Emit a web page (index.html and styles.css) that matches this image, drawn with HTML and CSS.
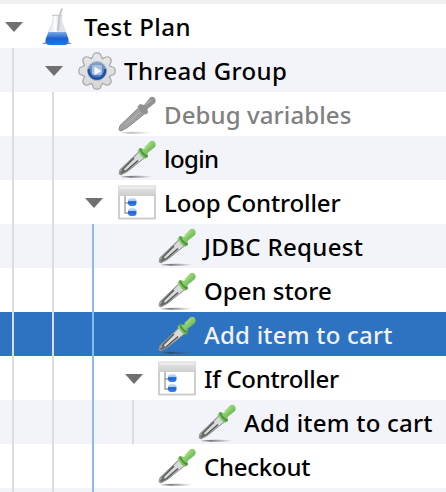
FILE: index.html
```html
<!DOCTYPE html>
<html lang="en">
<head>
<meta charset="utf-8">
<title>Test Plan</title>
<link rel="stylesheet" href="styles.css">
</head>
<body>
<svg class="defs" width="0" height="0" aria-hidden="true">
  <defs>
    <linearGradient id="glass" x1="0" y1="0" x2="1" y2="0"><stop offset="0" stop-color="#d8dde3"/><stop offset=".4" stop-color="#f5f7fa"/><stop offset=".6" stop-color="#dde2e7"/><stop offset="1" stop-color="#e4e8ed"/></linearGradient>
    <linearGradient id="liquid" x1="0" y1="0" x2="0" y2="1"><stop offset="0" stop-color="#7aaae6"/><stop offset=".5" stop-color="#1d60cf"/><stop offset="1" stop-color="#2374f5"/></linearGradient>
    <linearGradient id="bulb" x1="0" y1="0" x2="1" y2="1"><stop offset="0" stop-color="#7fbd63"/><stop offset=".45" stop-color="#8fd06c"/><stop offset="1" stop-color="#439039"/></linearGradient>
    <linearGradient id="shade"><stop offset="0" stop-color="#444" stop-opacity=".3"/><stop offset=".3" stop-color="#333" stop-opacity=".65"/><stop offset="1" stop-color="#555" stop-opacity="0"/></linearGradient>
    <linearGradient id="bar" x1="0" y1="0" x2="0" y2="1"><stop offset="0" stop-color="#e9e9e9"/><stop offset="1" stop-color="#cecece"/></linearGradient>
    <linearGradient id="ball" x1="0" y1="0" x2="0" y2="1"><stop offset="0" stop-color="#d5e7fa"/><stop offset=".38" stop-color="#9dc3ee"/><stop offset=".45" stop-color="#1c5fd0"/><stop offset="1" stop-color="#3d86ee"/></linearGradient>
    <linearGradient id="gearfill" x1="0" y1="0" x2="0" y2="1"><stop offset="0" stop-color="#e8e8e8"/><stop offset="1" stop-color="#d6d6d6"/></linearGradient>
    <linearGradient id="hub" x1="0" y1="0" x2="0" y2="1"><stop offset="0" stop-color="#8ba5ca"/><stop offset=".5" stop-color="#5c82bd"/><stop offset="1" stop-color="#3f78cc"/></linearGradient>
    <symbol id="flask" viewBox="0 0 38 38">
      <ellipse cx="19" cy="35.2" rx="14.500" ry="1.300" fill="#4b5057" opacity=".75"/>
      <path d="M15 7h8.500v6l6.500 17q2 6.500-3.500 7h-15q-5.500-.5-3.500-7L15 13z" fill="url(#glass)" stroke="#d8dce1" stroke-width=".8"/>
      <path d="M10.500 24h17.500l2.200 6.500q1.800 6-3.700 6.500h-15q-5.500-.5-3.500-6.500z" fill="url(#liquid)"/>
      <path d="M20 23l1.500-15 2.500-7.500" fill="none" stroke="#c2c6cb" stroke-width="2"/>
      <path d="M17.500 8v16" fill="none" stroke="#fff" stroke-width="2" opacity=".7"/>
      <path d="M14 7.500h10" stroke="#c8cdd2" stroke-width="1"/>
    </symbol>
    <symbol id="gear" viewBox="0 0 38 38">
      <path d="M15 4Q15 .8 19 .8T23 4L24.500 6.600 27.500 5.200Q30 4 32 6T32.800 10.500L31.400 13.500 34 15Q37.200 15 37.200 19T34 23L31.400 24.500 32.800 27.500Q34 30 32 32T27.500 32.800L24.500 31.400 23 34Q23 37.200 19 37.200T15 34L13.500 31.400 10.500 32.800Q8 34 6 32T5.200 27.500L6.600 24.500 4 23Q.8 23 .8 19T4 15L6.600 13.500 5.200 10.500Q4 8 6 6T10.500 5.200L13.500 6.600z" fill="url(#gearfill)" stroke="#a8a8a8" stroke-width="1.200"/>
      <circle cx="19" cy="19" r="9.500" fill="url(#hub)" stroke="#a9bbd5" stroke-width="1"/>
      <path d="M10.800 17a8.300 8.300 0 1 0 16.400 0" fill="none" stroke="#20509d" stroke-width="2.200"/>
      <rect x="14" y="13" width="10" height="10" rx="2" fill="#a9c0df"/>
      <path d="M16.500 14.500l7 4.500-7 4z" fill="#f3f6fb"/>
    </symbol>
    <symbol id="dropper" viewBox="0 0 38 38">
      <ellipse cx="19" cy="36.800" rx="16" ry="1" fill="url(#shade)"/>
      <path d="M21 11.500l6 6L9.500 31.500l-5.500 3q-2.500 1.200-3-1l1-4z" fill="#a3a6a4" stroke="#8a8d8b" stroke-width=".8"/>
      <path d="M21 12.500l5 5L9 30.500l-3 1-1.500-2z" fill="#d8dbd9"/>
      <path d="M4 30L16 18M8 31l12-10.500" fill="none" stroke="#585b59" stroke-width="1.500"/>
      <path d="M1.500 33l4-4 3 2.500-5 2.500z" fill="#696c6a"/>
      <path d="M19.500 10.500L22 8l4 1 6-7.500Q34 .2 36.500 1.500 38.500 4 37 7l-7.500 6 .5 4-2.500 1.500Q22 17 19.500 10.500z" fill="url(#bulb)"/>
      <path d="M22 8.500q2 6 7.500 8" fill="none" stroke="#4f9643" stroke-width="2.200"/>
      <path d="M27 8l5.500-5" stroke="#a1dc85" stroke-width="2.500" opacity=".65"/>
    </symbol>
    <symbol id="dropper-off" viewBox="0 0 38 38">
      <ellipse cx="19" cy="36.800" rx="16" ry="1" fill="url(#shade)" opacity=".5"/>
      <path d="M21 11.500l6 6L9.500 31.500l-5.500 3q-2.500 1.200-3-1l1-4z" fill="#a0a0a0" stroke="#8c8c8c" stroke-width="1"/>
      <path d="M19.500 10.500L22 8l4 1 6-7.500Q34 .2 36.500 1.500 38.500 4 37 7l-7.500 6 .5 4-2.500 1.500Q22 17 19.500 10.500z" fill="#929292"/>
      <path d="M7 29l15-13M27 9l6-5" stroke="#aaa" stroke-width="1.800"/>
    </symbol>
    <symbol id="controller" viewBox="0 0 38 38">
      <path d="M1 2h36v32.500H1z" fill="#fff" stroke="#cecece" stroke-width="2"/>
      <path d="M0 1h38v11H0z" fill="url(#bar)"/>
      <path d="M2 4h34" stroke="#efefef" stroke-width="1.500"/>
      <path d="M7 12v17h4M7 19h4" fill="none" stroke="#999" stroke-width="1.300"/>
      <rect x="10" y="14" width="8.500" height="8" rx="3" fill="url(#ball)"/>
      <rect x="10" y="24" width="8.500" height="8" rx="3" fill="url(#ball)"/>
    </symbol>
  </defs>
</svg>
<main class="tree">
  <div class="row"><i class="arrow"></i><svg class="icon"><use href="#flask"/></svg><span class="label l-plan">Test Plan</span></div>
  <div class="row"><i class="guide"></i><i class="arrow"></i><svg class="icon"><use href="#gear"/></svg><span class="label l-thread">Thread Group</span></div>
  <div class="row"><i class="guide"></i><i class="guide"></i><i class="leaf"></i><svg class="icon"><use href="#dropper-off"/></svg><span class="label off l-debug">Debug variables</span></div>
  <div class="row"><i class="guide"></i><i class="guide"></i><i class="leaf"></i><svg class="icon"><use href="#dropper"/></svg><span class="label l-login">login</span></div>
  <div class="row"><i class="guide"></i><i class="guide"></i><i class="arrow"></i><svg class="icon"><use href="#controller"/></svg><span class="label l-loop">Loop Controller</span></div>
  <div class="row"><i class="guide"></i><i class="guide"></i><i class="guide active"></i><i class="leaf"></i><svg class="icon"><use href="#dropper"/></svg><span class="label l-jdbc">JDBC Request</span></div>
  <div class="row"><i class="guide"></i><i class="guide"></i><i class="guide active"></i><i class="leaf"></i><svg class="icon"><use href="#dropper"/></svg><span class="label l-open">Open store</span></div>
  <div class="row selected"><i class="guide"></i><i class="guide"></i><i class="guide active"></i><i class="leaf"></i><svg class="icon"><use href="#dropper"/></svg><span class="label l-add">Add item to cart</span></div>
  <div class="row"><i class="guide"></i><i class="guide"></i><i class="guide active"></i><i class="arrow"></i><svg class="icon"><use href="#controller"/></svg><span class="label l-if">If Controller</span></div>
  <div class="row"><i class="guide"></i><i class="guide"></i><i class="guide active"></i><i class="guide"></i><i class="leaf"></i><svg class="icon"><use href="#dropper"/></svg><span class="label l-add">Add item to cart</span></div>
  <div class="row"><i class="guide"></i><i class="guide"></i><i class="guide active"></i><i class="leaf"></i><svg class="icon"><use href="#dropper"/></svg><span class="label l-check">Checkout</span></div>
  <div class="row"><i class="guide"></i><i class="guide"></i><i class="guide active"></i></div>
</main>
</body>
</html>
```
FILE: styles.css
```css
body {
  margin: 0;
  height: 492px;
  overflow: hidden;
  background: #fff;
  font-family: "Noto Sans", sans-serif;
}
.defs { position: absolute; }
.tree {
  height: 488px;
  overflow: hidden;
  border-top: 4px solid #f0f0f0;
}
.row {
  display: flex;
  align-items: center;
  height: 44px;
  background: #fff;
  color: #000;
}
.row:nth-child(even) { background: #f3f4f9; }
.row.selected { background: #2e72c2; color: #f0f2f6; }
.guide {
  flex: none;
  width: 40px;
  height: 44px;
  background: linear-gradient(#dcdcdc, #dcdcdc) 12px 0 / 2px 44px no-repeat;
}
.guide.active { background-image: linear-gradient(#87bbf2, #87bbf2); }
.arrow, .leaf { flex: none; width: 38px; height: 44px; }
.arrow::before {
  content: "";
  display: block;
  width: 18px;
  height: 10px;
  margin: 18px 0 0 5px;
  background: #707070;
  clip-path: polygon(0 0, 100% 0, 50% 100%);
}
.icon { flex: none; width: 38px; height: 38px; margin: 2px 8px 0 0; }
.label {
  padding-top: 2px;
  font-size: 24px;
  font-weight: 500;
  line-height: 42px;
  white-space: nowrap;
}
.off { color: #808080; }
.l-plan { letter-spacing: .5px; }
.l-thread { letter-spacing: .4px; }
.l-debug { letter-spacing: .1px; }
.l-login { letter-spacing: -.6px; }
.l-loop { letter-spacing: -.15px; }
.l-jdbc { letter-spacing: .35px; }
.l-add { letter-spacing: .23px; }
.l-if { letter-spacing: -.3px; }
.l-check { letter-spacing: -.25px; }
```
